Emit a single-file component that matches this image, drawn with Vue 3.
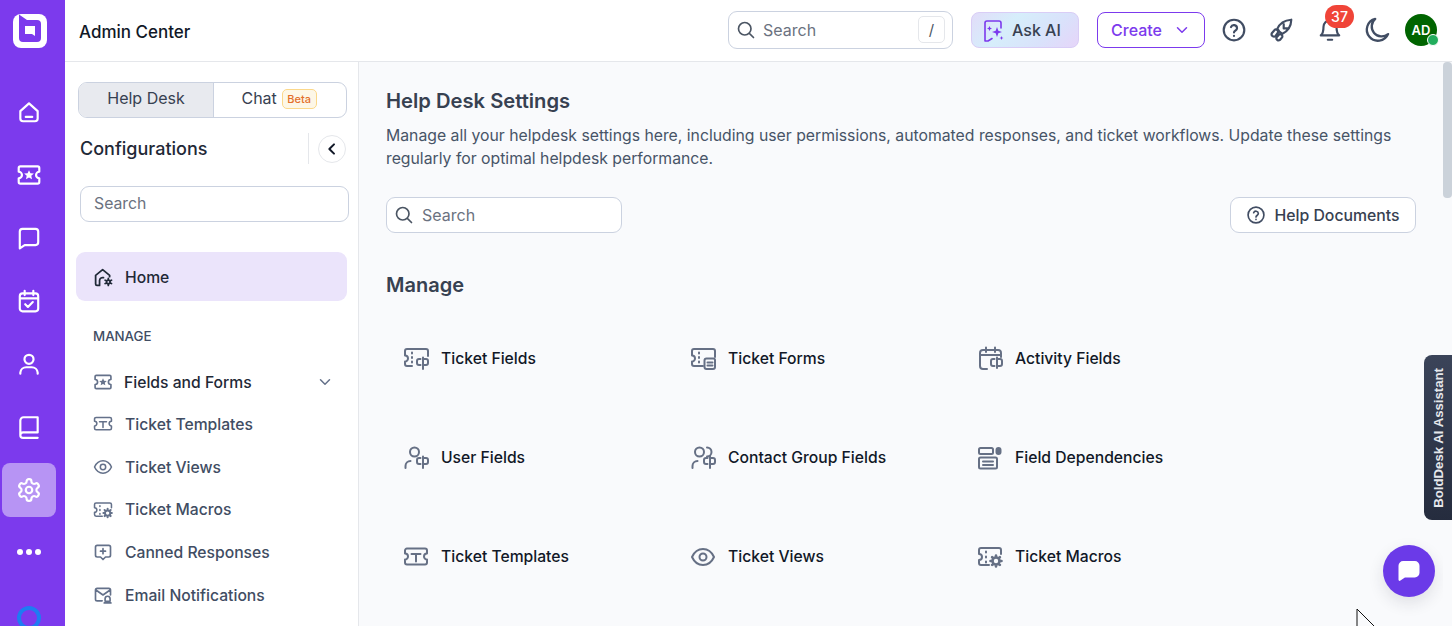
<script setup>
const ticketOpen = 'M9 20H4a2 2 0 0 1-2-2v-2.500a3 3 0 0 0 0-6V5a2 2 0 0 1 2-2h19a2 2 0 0 1 2 2v5'
const cp = 'M17.500 13H16a2 2 0 0 0-2 2v2a2 2 0 0 0 2 2h1.500M20 11.500V23M20 13h3a2 2 0 0 1 2 2v2a2 2 0 0 1-2 2h-3'
const dots = 'M9 6.500v1M9 11v1M9 15.500v1'
const bigGear = 'M19 13.500a3.500 3.500 0 1 1 0 7 3.500 3.500 0 0 1 0-7ZM19 11.500V13M19 21v1.500M13.500 17H15M23 17h1.500M15.100 13.100l1 1M21.900 19.900l1 1M15.100 20.900l1-1M21.900 14.100l1-1'
const icons = {
  home: [{ d: 'M4 11.200 12 4l8 7.200V18a2.500 2.500 0 0 1-2.500 2.500h-11A2.500 2.500 0 0 1 4 18ZM9 16.500h6' }],
  ticketStar: [{ d: 'M4 4h16a1.500 1.500 0 0 1 1.500 1.500V9a3 3 0 0 0 0 6v3.500A1.500 1.500 0 0 1 20 20H4a1.500 1.500 0 0 1-1.500-1.500V15a3 3 0 0 0 0-6V5.500A1.500 1.500 0 0 1 4 4Z' }, { d: 'm12 7.500 1.300 2.900 3.200.3-2.400 2.100.7 3.100-2.800-1.600-2.800 1.600.7-3.100-2.400-2.100 3.200-.3Z', fill: true }],
  chat: [{ d: 'M3.500 6A2.500 2.500 0 0 1 6 3.500h12A2.500 2.500 0 0 1 20.500 6v10a2.500 2.500 0 0 1-2.500 2.500H8l-4.500 3Z' }],
  calendar: [{ d: 'M6 5h12a2.500 2.500 0 0 1 2.500 2.500V19a2.500 2.500 0 0 1-2.500 2.500H6A2.500 2.500 0 0 1 3.500 19V7.500A2.500 2.500 0 0 1 6 5ZM8 2.500v4M16 2.500v4M3.500 9.500h17M8.500 15l2.500 2.500 4.500-4.500' }],
  user: [{ d: 'M12 3.500a4.200 4.200 0 1 1 0 8.400 4.200 4.200 0 0 1 0-8.400ZM4 21v-1a5.500 5.500 0 0 1 5.500-5h5a5.500 5.500 0 0 1 5.500 5v1' }],
  book: [{ d: 'M20 3H7a3 3 0 0 0-3 3v13.500M20 3v14H6.500A2.500 2.500 0 0 0 4 19.500 2.500 2.500 0 0 0 6.500 22H20' }],
  gear: [{ d: 'M12.220 2h-.44a2 2 0 0 0-2 2v.18a2 2 0 0 1-1 1.730l-.43.250a2 2 0 0 1-2 0l-.15-.08a2 2 0 0 0-2.730.730l-.22.380a2 2 0 0 0 .730 2.730l.15.100a2 2 0 0 1 1 1.720v.510a2 2 0 0 1-1 1.740l-.15.090a2 2 0 0 0-.730 2.730l.22.380a2 2 0 0 0 2.730.730l.15-.08a2 2 0 0 1 2 0l.43.250a2 2 0 0 1 1 1.730V20a2 2 0 0 0 2 2h.44a2 2 0 0 0 2-2v-.18a2 2 0 0 1 1-1.730l.43-.25a2 2 0 0 1 2 0l.15.080a2 2 0 0 0 2.730-.730l.22-.39a2 2 0 0 0-.730-2.730l-.15-.08a2 2 0 0 1-1-1.740v-.5a2 2 0 0 1 1-1.740l.15-.09a2 2 0 0 0 .730-2.730l-.22-.38a2 2 0 0 0-2.730-.730l-.15.080a2 2 0 0 1-2 0l-.43-.25a2 2 0 0 1-1-1.730V4a2 2 0 0 0-2-2ZM12 9a3 3 0 1 1 0 6 3 3 0 0 1 0-6Z' }],
  homeGear: [{ d: 'M6 21H4.500A1.500 1.500 0 0 1 3 19.500V9.500L11 3l8 6.500V11M7.500 21v-5.500a3.500 3.500 0 0 1 4.500-3.300' }, { d: 'M17.500 15a2 2 0 1 1 0 4 2 2 0 0 1 0-4ZM17.500 13v1.500M17.500 19.500V21M13.800 15l1.300.8M19.900 18.200l1.300.8M13.800 19l1.300-.8M19.900 15.800l1.300-.8' }],
  ticketT: [{ d: 'M4 4.500h18a2 2 0 0 1 2 2v3a3 3 0 0 0 0 6v3a2 2 0 0 1-2 2H4a2 2 0 0 1-2-2v-3a3 3 0 0 0 0-6v-3a2 2 0 0 1 2-2ZM8.500 10h9M13 10v7.500' }],
  eye: [{ d: 'M2 13c2.500-5.500 6.500-8 11-8s8.500 2.500 11 8c-2.500 5.500-6.500 8-11 8s-8.500-2.500-11-8ZM13 9.500a3.500 3.500 0 1 1 0 7 3.500 3.500 0 0 1 0-7Z' }],
  ticketGear: [{ d: 'M12 21H4a2 2 0 0 1-2-2v-3a3 3 0 0 0 0-6V6a2 2 0 0 1 2-2h18a2 2 0 0 1 2 2v4M9 7.500v1M9 12.500v1M9 17.500v1' }, { d: bigGear, bold: true }],
  cannedPlus: [{ d: 'M5 4h14a2 2 0 0 1 2 2v10a2 2 0 0 1-2 2h-4l-3 3-3-3H5a2 2 0 0 1-2-2V6a2 2 0 0 1 2-2ZM12 8v6M9 11h6' }],
  mailBell: [{ d: 'M11 19H5a2 2 0 0 1-2-2V6a2 2 0 0 1 2-2h14a2 2 0 0 1 2 2v6M3.500 6l8.500 6 8.500-6M17.500 13.500a3 3 0 0 1 3 3v3h-6v-3a3 3 0 0 1 3-3ZM13.500 21.500h8' }],
  tField: [{ d: ticketOpen }, { d: dots }, { d: cp }],
  tForm: [{ d: 'M13 20H4a2 2 0 0 1-2-2v-2.500a3 3 0 0 0 0-6V5a2 2 0 0 1 2-2h19a2 2 0 0 1 2 2v6' }, { d: dots }, { d: 'M16.500 12.500h7a1.500 1.500 0 0 1 1.500 1.500v7a2 2 0 0 1-2 2h-6.500a2 2 0 0 1-2-2v-6.500a2 2 0 0 1 2-2ZM17.500 16.500h5M17.500 19.500h5' }],
  uField: [{ d: 'M11.500 2.500a4.500 4.500 0 1 1 0 9 4.500 4.500 0 0 1 0-9ZM2.500 23v-2a5 5 0 0 1 5-5' }, { d: cp }],
  cField: [{ d: 'M9.500 2.500a4.500 4.500 0 1 1 0 9 4.500 4.500 0 0 1 0-9ZM17 2.500a4.500 4.500 0 0 1 0 9M2.500 23v-2a5 5 0 0 1 5-5' }, { d: cp }],
  aField: [{ d: 'M10 23H6a3 3 0 0 1-3-3V7a3 3 0 0 1 3-3h15a3 3 0 0 1 3 3v4M3 9h21M9 1.500v4.500M18 1.500v4.500' }, { d: 'M17.500 13H16a2 2 0 0 0-2 2v3a2 2 0 0 0 2 2h1.500M20 11.500V22M20 13h3a2 2 0 0 1 2 2v3a2 2 0 0 1-2 2h-3' }],
  dep: [{ d: 'M3.500 3h11A1.500 1.500 0 0 1 16 4.500v3A1.500 1.500 0 0 1 14.500 9h-11A1.500 1.500 0 0 1 2 7.500v-3A1.500 1.500 0 0 1 3.500 3ZM3.500 12.500h15a1.500 1.500 0 0 1 1.500 1.500v8a1.500 1.500 0 0 1-1.500 1.500h-15A1.500 1.500 0 0 1 2 22v-8a1.500 1.500 0 0 1 1.500-1.500ZM6 16.500h10M6 20h10' }, { d: 'M21.500 2a3 3 0 0 1 3 3v2a3 3 0 0 1-6 0V5a3 3 0 0 1 3-3Z', fill: true }],
  search: [{ d: 'M10.500 3a7.500 7.500 0 1 1 0 15 7.500 7.500 0 0 1 0-15ZM16 16l5 5' }],
  help: [{ d: 'M12 2.500a9.500 9.500 0 1 1 0 19 9.500 9.500 0 0 1 0-19ZM9.200 9.300a2.900 2.900 0 0 1 5.600 1c0 2-2.800 2.500-2.800 4M12 17.300v.2' }],
  rocket: [{ d: 'M10.500 13.500 8.700 10.800C10.500 6.500 15 3 21.500 2.500c-.2 6.500-3.700 10.700-8.200 13ZM14.500 6.500v4h4' }, { d: 'M6.500 11.500a2.200 2.200 0 0 1 2.500 3.200l-2 2.800a2.200 2.200 0 0 1-3.500-2.500ZM10.500 16a2 2 0 0 1 2.500 2.800l-2 2.400a2 2 0 0 1-3-2.500Z' }],
  bell: [{ d: 'M6 9a6 6 0 0 1 12 0c0 6 2.500 8 2.500 8h-17S6 15 6 9ZM10 21h4' }],
  moon: [{ d: 'M10.500 2.500a9.500 9.500 0 1 0 11 13 8.500 8.500 0 0 1-11-13Z' }],
  chevronDown: [{ d: 'm6 9 6 6 6-6' }],
  sparkChat: [{ d: 'M11 20.500l-4 2.500-3 0V5a2 2 0 0 1 2-2h12a2 2 0 0 1 2 2v5' }, { d: 'm16 9 1.300 3.700L21 14l-3.700 1.300L16 19l-1.300-3.700L11 14l3.700-1.300ZM8.500 8l.8 1.700 1.700.8-1.700.8-.8 1.700-.8-1.700L6 10.500l1.700-.8ZM20.500 18l.6 1.400 1.400.6-1.400.6-.6 1.400-.6-1.400-1.400-.6 1.400-.6Z', fill: true }]
}
const railItems = ['home', 'ticketStar', 'chat', 'calendar', 'user', 'book', 'gear']
const navItems = [
  { label: 'Ticket Templates', icon: 'ticketT' },
  { label: 'Ticket Views', icon: 'eye' },
  { label: 'Ticket Macros', icon: 'ticketGear' },
  { label: 'Canned Responses', icon: 'cannedPlus' },
  { label: 'Email Notifications', icon: 'mailBell' }
]
const manage = [
  { label: 'Ticket Fields', icon: 'tField' },
  { label: 'Ticket Forms', icon: 'tForm' },
  { label: 'Activity Fields', icon: 'aField' },
  { label: 'User Fields', icon: 'uField' },
  { label: 'Contact Group Fields', icon: 'cField' },
  { label: 'Field Dependencies', icon: 'dep' },
  { label: 'Ticket Templates', icon: 'ticketT' },
  { label: 'Ticket Views', icon: 'eye' },
  { label: 'Ticket Macros', icon: 'ticketGear' }
]
function vb(name) {
  return ['tField', 'tForm', 'uField', 'cField', 'aField', 'dep', 'ticketT', 'eye', 'ticketGear'].includes(name) ? '0 0 26 26' : '0 0 24 24'
}
</script>

<template>
  <div class="app">
    <nav class="rail">
      <div class="logo">
        <svg width="34" height="34" viewBox="0 0 34 34">
          <rect width="34" height="34" rx="8" fill="#fff" />
          <path fill="#7c3aed" d="M6 0.500 14 6h10a4 4 0 0 1 4 4v14a4 4 0 0 1-4 4H10a4 4 0 0 1-4-4Z" />
          <path fill="#fff" d="M12 12h10v10l-3-2h-7Z" />
        </svg>
      </div>
      <div v-for="name in railItems" :key="name" class="rail-item" :class="{ active: name === 'gear' }">
        <svg width="26" height="26" viewBox="0 0 24 24" class="ico white">
          <path v-for="(p, i) in icons[name]" :key="i" :d="p.d" :class="{ filled: p.fill }" />
        </svg>
      </div>
      <div class="rail-dots"><i></i><i></i><i></i></div>
      <div class="rail-ring"></div>
    </nav>

    <div class="column">
      <header class="top">
        <div class="app-title">Admin Center</div>
        <div class="top-search">
          <svg width="20" height="20" viewBox="0 0 24 24" class="ico slate"><path v-for="(p, i) in icons.search" :key="i" :d="p.d" /></svg>
          <span class="ph">Search</span>
          <span class="slash">/</span>
        </div>
        <button class="ask">
          <svg width="24" height="24" viewBox="0 0 24 24" class="ico purple thin"><path v-for="(p, i) in icons.sparkChat" :key="i" :d="p.d" :class="{ filled: p.fill }" /></svg>
          <span>Ask AI</span>
        </button>
        <button class="create">
          <span>Create</span>
          <svg width="18" height="18" viewBox="0 0 24 24" class="ico purple"><path :d="icons.chevronDown[0].d" /></svg>
        </button>
        <div class="top-icon first"><svg width="26" height="26" viewBox="0 0 24 24" class="ico dark"><path :d="icons.help[0].d" /></svg></div>
        <div class="top-icon rocket"><svg width="26" height="26" viewBox="0 0 24 24" class="ico dark"><path v-for="(p, i) in icons.rocket" :key="i" :d="p.d" /></svg></div>
        <div class="top-icon">
          <svg width="26" height="26" viewBox="0 0 24 24" class="ico dark"><path :d="icons.bell[0].d" /></svg>
          <span class="badge">37</span>
        </div>
        <div class="top-icon"><svg width="28" height="28" viewBox="0 0 24 24" class="ico dark"><path :d="icons.moon[0].d" /></svg></div>
        <div class="avatar">AD<i></i></div>
      </header>

      <div class="body">
        <aside class="side">
          <div class="tabs">
            <div class="tab on"><span>Help Desk</span></div>
            <div class="tab chat"><span>Chat</span> <span class="beta">Beta</span></div>
          </div>
          <div class="conf">
            <h2>Configurations</h2>
            <span class="conf-rule"></span>
            <span class="collapse">
              <svg width="16" height="16" viewBox="0 0 24 24" class="ico black"><path d="m15 5-7 7 7 7" /></svg>
            </span>
          </div>
          <div class="side-search">Search</div>
          <div class="home-pill">
            <svg width="21" height="21" viewBox="0 0 24 24" class="ico dark2"><path v-for="(p, i) in icons.homeGear" :key="i" :d="p.d" /></svg>
            <span>Home</span>
          </div>
          <div class="side-head">MANAGE</div>
          <div class="group">
            <svg width="20" height="20" viewBox="0 0 24 24" class="ico grey"><path v-for="(p, i) in icons.ticketStar" :key="i" :d="p.d" :class="{ filled: p.fill }" /></svg>
            <span>Fields and Forms</span>
            <svg width="18" height="18" viewBox="0 0 24 24" class="ico grey chev"><path :d="icons.chevronDown[0].d" /></svg>
          </div>
          <div v-for="n in navItems" :key="n.label" class="nav-item">
            <svg width="20" height="20" :viewBox="vb(n.icon)" class="ico grey"><path v-for="(p, i) in icons[n.icon]" :key="i" :d="p.d" :class="{ filled: p.fill, bold: p.bold }" /></svg>
            <span>{{ n.label }}</span>
          </div>
        </aside>

        <main class="main">
          <h1>Help Desk Settings</h1>
          <p class="desc">Manage all your helpdesk settings here, including user permissions, automated responses, and ticket workflows. Update these settings regularly for optimal helpdesk performance.</p>
          <div class="tools">
            <div class="main-search">
              <svg width="20" height="20" viewBox="0 0 24 24" class="ico slate"><path v-for="(p, i) in icons.search" :key="i" :d="p.d" /></svg>
              <span class="ph">Search</span>
            </div>
            <button class="docs">
              <svg width="20" height="20" viewBox="0 0 24 24" class="ico dark"><path :d="icons.help[0].d" /></svg>
              <span>Help Documents</span>
            </button>
          </div>
          <h2 class="sec">Manage</h2>
          <div class="grid">
            <div v-for="m in manage" :key="m.label" class="cell">
              <svg width="26" height="26" :viewBox="vb(m.icon)" class="ico grey2"><path v-for="(p, i) in icons[m.icon]" :key="i" :d="p.d" :class="{ filled: p.fill, bold: p.bold }" /></svg>
              <span>{{ m.label }}</span>
            </div>
          </div>
          <div class="fab">
            <svg width="28" height="28" viewBox="0 0 24 24"><path fill="#fff" d="M7 3.500h10A4 4 0 0 1 21 7.500v6a4 4 0 0 1-4 4H8.500L4 20.500a1 1 0 0 1-1-1v-12a4 4 0 0 1 4-4Z" /></svg>
          </div>
          <svg class="cursor" width="20" height="20" viewBox="0 0 20 20"><path d="M1 1v18M1 1l18 18" fill="#fff" stroke="#111" stroke-width="1" /></svg>
        </main>

        <div class="scroll"><div class="thumb"></div></div>
        <div class="assist"><span>BoldDesk AI Assistant</span></div>
      </div>
    </div>
  </div>
</template>

<style scoped>
.app {
  display: flex;
  width: 1452px;
  height: 626px;
  overflow: hidden;
  font-family: Inter, "Noto Sans", sans-serif;
  background: #fff;
  color: #111827;
}
.ico { fill: none; stroke: currentColor; stroke-width: 2; stroke-linecap: round; stroke-linejoin: round; flex: none; }
.ico .filled { fill: currentColor; stroke: none; }
.ico .bold { stroke-width: 2.6; }
.ico.thin { stroke-width: 1.6; }
.white { color: #fff; }
.slate { color: #4b5563; }
.purple { color: #7c3aed; }
.dark { color: #414d63; }
.dark2 { color: #1f2937; }
.black { color: #111827; stroke-width: 3; }
.grey { color: #64718a; }
.grey2 { color: #667085; }

.rail {
  width: 65px;
  flex: none;
  box-sizing: border-box;
  background: #7c3aed;
  display: flex;
  flex-direction: column;
  padding-left: 2px;
}
.logo { height: 85px; width: 54px; flex: none; display: flex; justify-content: center; padding-top: 14px; box-sizing: border-box; }
.logo svg { margin-left: 1px; }
.rail-item { width: 54px; height: 54px; flex: none; margin-bottom: 9px; display: flex; align-items: center; justify-content: center; border-radius: 8px; }
.rail-item.active { background: #b794f4; }
.rail-dots { display: flex; gap: 3px; width: 54px; height: 54px; flex: none; align-items: center; justify-content: center; margin-top: -1px; }
.rail-dots i { width: 6px; height: 6px; border-radius: 50%; background: #fff; }
.rail-ring { width: 24px; height: 24px; box-sizing: border-box; border: 4px solid #1d7cf2; border-radius: 50%; margin: 27px 0 0 15px; flex: none; }

.column { flex: 1; min-width: 0; display: flex; flex-direction: column; }
.top {
  height: 62px;
  flex: none;
  box-sizing: border-box;
  border-bottom: 1px solid #e5e7eb;
  display: flex;
  align-items: center;
  padding: 0 15px 2px 14px;
}
.app-title { font-size: 17px; font-weight: 500; color: #111827; margin-right: auto; margin-top: 4px; }
.top-search {
  width: 225px;
  height: 38px;
  box-sizing: border-box;
  border: 1px solid #cbd2e0;
  border-radius: 9px;
  display: flex;
  align-items: center;
  padding: 0 7px 0 7px;
  gap: 7px;
  margin-right: 18px;
}
.ph { font-size: 16px; color: #6b7280; }
.slash {
  margin-left: auto;
  width: 27px;
  height: 27px;
  box-sizing: border-box;
  border: 1px solid #e5e7eb;
  border-radius: 5px;
  display: flex;
  align-items: center;
  justify-content: center;
  color: #4b5563;
  font-size: 15px;
}
button { font-family: inherit; cursor: pointer; }
.ask {
  width: 108px;
  height: 36px;
  box-sizing: border-box;
  border: 1px solid #d9cdf6;
  border-radius: 8px;
  background: linear-gradient(135deg, #e2dcf9 0%, #d6eefb 35%, #d9e2fb 70%, #e6d5f9 100%);
  display: flex;
  align-items: center;
  gap: 7px;
  padding: 0 0 0 9px;
  font-size: 16px;
  font-weight: 500;
  color: #374151;
  margin-right: 18px;
}
.create {
  width: 108px;
  height: 36px;
  box-sizing: border-box;
  border: 1.5px solid #7c3aed;
  border-radius: 8px;
  background: #fff;
  color: #7c3aed;
  font-size: 16px;
  font-weight: 500;
  display: flex;
  align-items: center;
  justify-content: center;
  gap: 11px;
}
.top-icon { position: relative; display: flex; align-items: center; justify-content: center; height: 40px; width: 47px; }
.top-icon.first { margin-left: 5px; }
.top-icon.rocket { margin-right: 2px; }
.badge {
  position: absolute;
  left: 19px;
  top: -5px;
  width: 29px;
  height: 23px;
  border-radius: 12px;
  background: #f04438;
  color: #fff;
  font-size: 14px;
  font-weight: 500;
  display: flex;
  align-items: center;
  justify-content: center;
}
.avatar {
  position: relative;
  width: 32px;
  height: 32px;
  margin-left: 5px;
  border-radius: 50%;
  background: #006400;
  color: #fff;
  font-size: 13px;
  font-weight: 600;
  display: flex;
  align-items: center;
  justify-content: center;
}
.avatar i {
  position: absolute;
  right: -2px;
  bottom: 0;
  width: 10px;
  height: 10px;
  border-radius: 50%;
  background: #22ad5c;
  border: 1px solid #fff;
}

.body { flex: 1; min-height: 0; display: flex; position: relative; }
.side {
  width: 294px;
  flex: none;
  box-sizing: border-box;
  border-right: 1px solid #e5e7eb;
  padding: 20px 11px 0 11px;
  overflow: hidden;
}
.tabs {
  margin-left: 2px;
  width: 269px;
  height: 36px;
  box-sizing: border-box;
  border: 1px solid #cbd2e0;
  border-radius: 9px;
  display: flex;
  overflow: hidden;
}
.tab { display: flex; align-items: center; justify-content: center; gap: 5px; font-size: 16px; color: #374151; padding-bottom: 4px; box-sizing: border-box; }
.tab.on { flex: none; width: 135px; background: #e8eaef; border-right: 1px solid #cbd2e0; }
.tab.chat { flex: 1; padding-right: 2px; }
.beta {
  font-size: 11px;
  font-weight: 500;
  color: #e3702c;
  background: #fdf7e7;
  border: 1px solid #fbd88a;
  border-radius: 5px;
  padding: 2px 4.500px;
  line-height: 14px;
  margin-top: 2px;
}
.conf { display: flex; align-items: center; margin: 14px 0 0 4px; height: 32px; }
.conf h2 { font-size: 18px; font-weight: 500; margin: 0; color: #1f2937; margin-right: auto; }
.conf-rule { width: 1px; height: 31px; background: #e5e7eb; margin-right: 9px; }
.collapse {
  width: 28px;
  height: 28px;
  box-sizing: border-box;
  border: 1px solid #e5e7eb;
  border-radius: 50%;
  display: flex;
  align-items: center;
  justify-content: center;
  margin: 1px 1px 0 0;
}
.side-search {
  margin: 22px 0 0 4px;
  width: 269px;
  height: 36px;
  box-sizing: border-box;
  border: 1px solid #cbd2e0;
  border-radius: 9px;
  display: flex;
  align-items: center;
  padding: 0 0 1px 13px;
  font-size: 15.800px;
  color: #6b7280;
}
.home-pill {
  margin-top: 30px;
  width: 271px;
  height: 49px;
  border-radius: 9px;
  background: #ebe4fb;
  display: flex;
  align-items: center;
  gap: 11px;
  padding: 1px 0 0 17px;
  box-sizing: border-box;
  font-size: 15.700px;
  font-weight: 450;
  color: #1f2937;
}
.side-head { margin: 27px 0 0 17px; font-size: 13.300px; font-weight: 450; color: #414d63; line-height: 16px; }
.group {
  display: flex;
  align-items: center;
  gap: 11px;
  margin: 17px 0 0 17px;
  height: 42px;
  font-size: 15.700px;
  font-weight: 450;
  color: #1f2937;
  width: 241px;
}
.chev { margin-left: auto; }
.nav-item {
  display: flex;
  align-items: center;
  gap: 12px;
  margin-left: 17px;
  height: 42.700px;
  font-size: 15.700px;
  font-weight: 450;
  color: #414d63;
}

.main {
  flex: 1;
  min-width: 0;
  position: relative;
  background: #f9fafc;
  padding: 24px 27px 0 27px;
  overflow: hidden;
}
h1 { margin: 0; font-size: 20.200px; font-weight: 600; color: #374151; line-height: 30px; }
.desc { margin: 8px 0 0; font-size: 15.780px; line-height: 23px; color: #475467; }
.tools { display: flex; justify-content: space-between; margin-top: 27px; }
.main-search {
  width: 236px;
  height: 36px;
  box-sizing: border-box;
  border: 1px solid #cbd2e0;
  border-radius: 9px;
  background: #fff;
  display: flex;
  align-items: center;
  gap: 8px;
  padding-left: 7px;
}
.docs {
  width: 186px;
  height: 36px;
  box-sizing: border-box;
  border: 1px solid #cbd2e0;
  border-radius: 9px;
  background: #fff;
  display: flex;
  align-items: center;
  justify-content: center;
  gap: 8px;
  font-size: 15.800px;
  font-weight: 450;
  color: #374151;
}
.sec { margin: 37px 0 0; font-size: 20px; font-weight: 600; color: #374151; line-height: 30px; }
.grid {
  display: grid;
  grid-template-columns: repeat(3, 287px);
  grid-auto-rows: 99px;
  margin: 9px 0 0 17px;
}
.cell { display: flex; align-items: center; gap: 12px; height: 99px; font-size: 15.700px; font-weight: 450; color: #111827; }

.assist {
  position: absolute;
  right: 0;
  top: 293px;
  width: 28px;
  height: 165px;
  box-sizing: border-box;
  background: linear-gradient(180deg, #3b4459, #252c3e);
  border-radius: 8px 0 0 8px;
  display: flex;
  align-items: center;
  justify-content: center;
}
.assist span {
  writing-mode: vertical-rl;
  transform: rotate(180deg);
  color: #e5e7eb;
  font-family: "Liberation Sans", sans-serif;
  font-size: 13.200px;
  font-weight: 700;
  white-space: nowrap;
}
.fab {
  position: absolute;
  left: 1024px;
  top: 483px;
  width: 52px;
  height: 52px;
  border-radius: 50%;
  background: #6b3ae8;
  box-shadow: 0 6px 16px rgba(30, 30, 60, .12);
  display: flex;
  align-items: center;
  justify-content: center;
}
.cursor { position: absolute; left: 997px; top: 546px; }
.scroll { width: 9px; flex: none; background: #f9fafc; }
.thumb { height: 136px; border-radius: 4px; background: #cbd2da; }
</style>
